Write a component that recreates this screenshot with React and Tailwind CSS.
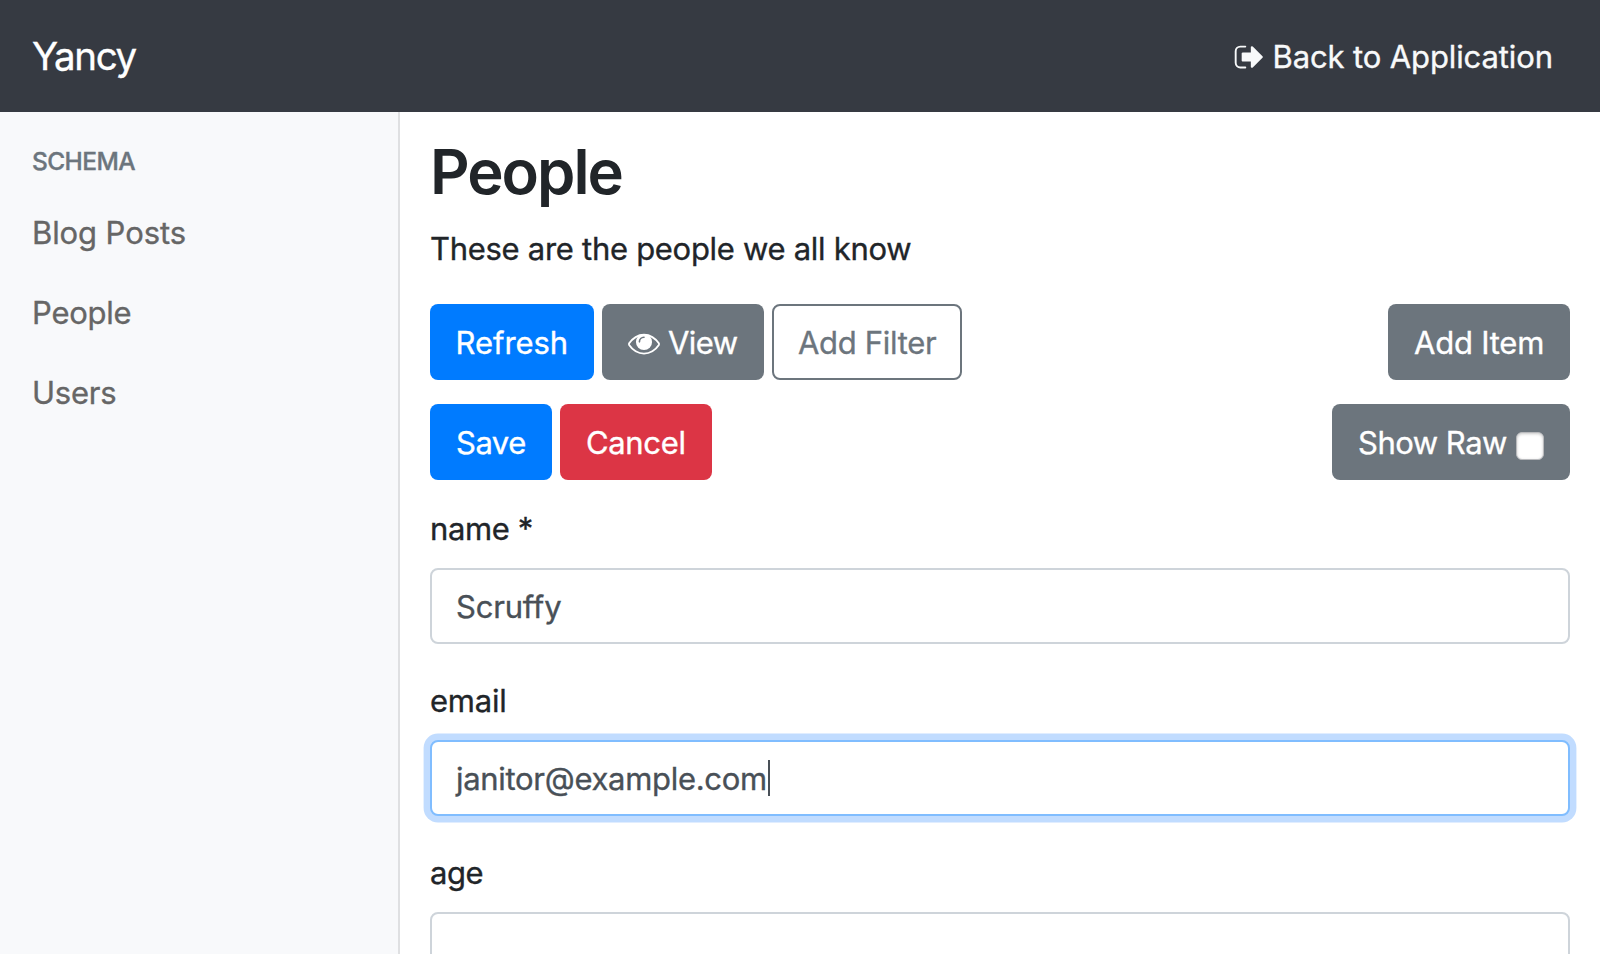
import React from "react";

function SignOutIcon() {
  return (
    <svg viewBox="0 0 1792 1792" className="mt-px h-8 w-8 shrink-0 overflow-visible" aria-hidden="true">
      <path
        d="M690 312H410a260 260 0 0 0-260 260v648a260 260 0 0 0 260 260H690"
        fill="none"
        stroke="currentColor"
        strokeWidth="106"
        strokeLinecap="round"
      />
      <path
        fill="currentColor"
        d="M1670 896q0 26-19 45l-544 544q-19 19-45 19t-45-19-19-45v-288h-448q-26 0-45-19t-19-45v-384q0-26 19-45t45-19h448v-288q0-26 19-45t45-19 45 19l544 544q19 19 19 45z"
      />
    </svg>
  );
}

function EyeIcon() {
  return (
    <svg viewBox="0 0 1792 1792" className="h-8 w-8 shrink-0 overflow-visible" fill="none" aria-hidden="true">
      <path
        d="M66 915q140-218 363-350t467-132 467 132 363 350q26 45 0 90-140 218-363 350t-467 132-467-132-363-350q-26-45 0-90z"
        stroke="currentColor"
        strokeWidth="104"
      />
      <circle cx="896" cy="840" r="452" fill="currentColor" />
      <path d="M640 832A256 256 0 0 1 896 576" stroke="#6c757d" strokeWidth="92" strokeLinecap="round" />
    </svg>
  );
}

function Button({ className, children }) {
  return (
    <button
      type="button"
      className={`flex h-[76px] shrink-0 items-center rounded-lg pt-px text-left whitespace-nowrap ${className}`}
    >
      {children}
    </button>
  );
}

function Field({ label, labelClass, inputClass, children }) {
  return (
    <div className="mb-8">
      <div className={`mb-4 h-12 pt-px leading-[47px] ${labelClass}`}>{label}</div>
      <div className={`flex h-[76px] items-center rounded-lg border-2 bg-white pt-px text-[#495057] ${inputClass}`}>
        {children}
      </div>
    </div>
  );
}

export default function App() {
  return (
    <div className="flex h-[954px] w-[1600px] flex-col overflow-hidden bg-white font-['Inter','Liberation_Sans',sans-serif] text-[31px] leading-[48px] text-[#212529] [-webkit-text-stroke:0.35px_currentColor]">
      <header className="flex h-28 shrink-0 items-center justify-between bg-[#363a42] pr-12 pl-8">
        <a className="text-[38.5px] tracking-[-1.35px] text-white">Yancy</a>
        <a className="flex w-[319.5px] items-center text-[#f8f9fa]">
          <SignOutIcon />
          <span className="pt-px pl-2 tracking-[-0.12px] whitespace-nowrap">Back to Application</span>
        </a>
      </header>

      <div className="flex min-h-0 flex-1">
        <aside className="w-[400px] shrink-0 border-r-2 border-[#dfe0e2] bg-[#f8f9fb] pt-[34px] pl-8 text-[#666666]">
          <h6 className="mb-[16px] h-[31px] text-[24.5px] leading-[31px] font-medium tracking-[-0.6px] text-[#6c757d]">
            SCHEMA
          </h6>
          <nav className="flex flex-col">
            <a className="h-20 leading-[80px] tracking-[-0.1px]">Blog Posts</a>
            <a className="h-20 leading-[80px] tracking-[-0.25px]">People</a>
            <a className="h-20 leading-[80px] tracking-[-0.25px]">Users</a>
          </nav>
        </aside>

        <main className="w-[1170px] shrink-0 pt-[21px] pl-[30px]">
          <h1 className="mb-[15px] h-[77px] text-[61.5px] leading-[77px] font-semibold tracking-[-2px] [-webkit-text-stroke:0]">
            People
          </h1>
          <p className="mb-[31px] h-12 tracking-[-0.29px]">These are the people we all know</p>

          <div className="mb-6 flex justify-between text-white">
            <div className="flex gap-2">
              <Button className="w-[164px] bg-[#007bff] pl-[25.5px] tracking-[-0.05px]">Refresh</Button>
              <Button className="w-[162px] bg-[#6c757d] pl-[26px] tracking-[-0.55px]">
                <EyeIcon />
                <span className="pl-2">View</span>
              </Button>
              <Button className="w-[190px] border-2 border-[#6c757d] pl-6 tracking-[-0.3px] text-[#6c757d]">
                Add Filter
              </Button>
            </div>
            <Button className="w-[182px] bg-[#6c757d] pl-[26px] tracking-[-0.22px]">Add Item</Button>
          </div>

          <div className="mb-6 flex justify-between text-white">
            <div className="flex gap-2">
              <Button className="w-[122px] bg-[#007bff] pl-[26px] tracking-[-0.5px]">Save</Button>
              <Button className="w-[152px] bg-[#dc3545] pl-[26px] tracking-[-0.35px]">Cancel</Button>
            </div>
            <Button className="w-[238px] bg-[#6c757d] pl-[26px] tracking-[-0.5px]">
              <span className="w-[158px]">Show Raw</span>
              <span className="mt-[7px] h-7 w-7 rounded-[6px] border border-[#b9babd] bg-white shadow-[inset_0_1px_3px_rgba(0,0,0,0.22)]" />
            </Button>
          </div>

          <Field label="name *" labelClass="tracking-[-0.4px]" inputClass="border-[#ced4da] pl-6 tracking-[-0.2px]">
            Scruffy
          </Field>
          <Field
            label="email"
            labelClass="tracking-[-0.25px]"
            inputClass="border-[#80bdff] pl-6 tracking-[-0.3px] shadow-[0_0_0_6.4px_#c1dcff]"
          >
            <span className="w-[312px] whitespace-nowrap">janitor@example.com</span>
            <span className="mb-0.5 h-9 w-0.5 bg-[#495057]" />
          </Field>
          <Field label="age" labelClass="tracking-[-0.4px]" inputClass="border-[#ced4da]" />
        </main>
      </div>
    </div>
  );
}
